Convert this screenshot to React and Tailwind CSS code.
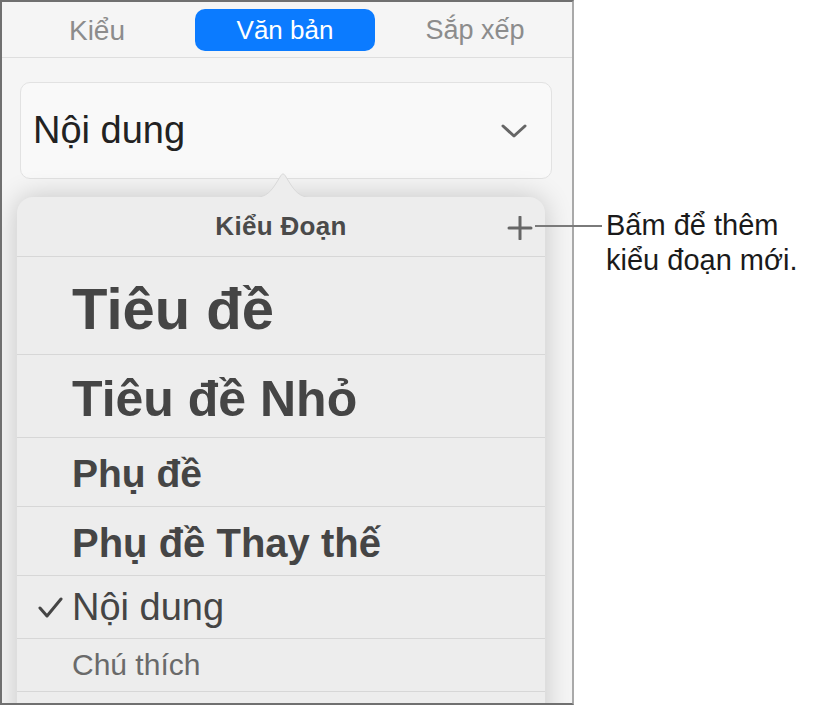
import React from 'react';

const rows = [
  { label: 'Tiêu đề', h: 'h-[98px]', text: 'text-[58px] font-bold text-[#454545] pt-[7px]' },
  { label: 'Tiêu đề Nhỏ', h: 'h-[83px]', text: 'text-[50px] font-bold text-[#454545] pt-[5px]' },
  { label: 'Phụ đề', h: 'h-[69px]', text: 'text-[39px] font-bold text-[#454545] pt-[3px]' },
  { label: 'Phụ đề Thay thế', h: 'h-[69px]', text: 'text-[40px] font-bold text-[#454545] pt-[3px]' },
  { label: 'Nội dung', h: 'h-[63px]', text: 'text-[38px] text-[#454545]', checked: true },
  { label: 'Chú thích', h: 'h-[53px]', text: 'text-[30px] text-[#6a6a6a]' },
  { label: '', h: 'h-[40px]', text: '' },
];

const App = () => {
  return (
    <div className="relative w-[814px] h-[705px] bg-white font-['Liberation_Sans',Arial,sans-serif]">
      {/* PANEL */}
      <div className="w-[574px] h-[705px] border-t-2 border-l-2 border-b-2 border-r-2 border-t-[#707070] border-l-[#707070] border-b-[#707070] border-r-[#a9a9a9] bg-[#f5f5f5] overflow-hidden">
        {/* TABS */}
        <div className="h-[56px] flex items-center border-b border-[#dedede]">
          <div className="w-[190px] text-center text-[28px] text-[#8c8c8c] pt-[2px]">Kiểu</div>
          <div className="ml-[3px] w-[180px] h-[42px] rounded-[10px] bg-[#0b7bff] flex items-center justify-center text-[26px] text-white pt-[2px]">Văn bản</div>
          <div className="ml-[5px] w-[190px] text-center text-[27px] text-[#8c8c8c] pt-[2px]">Sắp xếp</div>
        </div>

        {/* DROPDOWN */}
        <div className="ml-[18px] mt-[24px] w-[532px] h-[97px] rounded-[10px] border border-[#e2e2e2] bg-[#f9f9f9] flex items-center justify-between pl-[12px] pr-[24px]">
          <span className="text-[38px] text-[#222]">Nội dung</span>
          <svg width="26" height="14" viewBox="0 0 26 14">
            <polyline points="2,2 13,12 24,2" fill="none" stroke="#666" strokeWidth="3" strokeLinecap="round" strokeLinejoin="round" />
          </svg>
        </div>

        {/* POPOVER */}
        <div className="relative ml-[15px] mt-[18px] w-[528px] rounded-t-[16px] bg-[#ededed] shadow-[0_0_28px_rgba(0,0,0,0.2)]">
          <svg className="absolute left-[233px] top-[-26px]" width="66" height="27" viewBox="0 0 66 27">
            <path d="M0 27 C14 27 19 23 25 14 L30 6 C32 2 34 2 36 6 L41 14 C47 23 52 27 66 27 Z" fill="#ededed" stroke="#d9d9d9" strokeWidth="1" />
            <rect x="0" y="26" width="66" height="2" fill="#ededed" />
          </svg>
          <div className="relative h-[60px] flex items-center justify-center border-b border-[#d7d7d7]">
            <span className="text-[26px] font-bold text-[#4a4a4a] tracking-[0.3px]">Kiểu Đoạn</span>
            <svg className="absolute right-[12px] top-[19px]" width="26" height="24" viewBox="0 0 26 24">
              <path d="M13 1 V23 M2 12 H24" stroke="#666" strokeWidth="3" strokeLinecap="round" />
            </svg>
          </div>
          {rows.map((r, i) => (
            <div key={i} className={`relative ${r.h} flex items-center pl-[55px] border-b border-[#d7d7d7]`}>
              {r.checked && (
                <svg className="absolute left-[21px] top-[21px]" width="25" height="22" viewBox="0 0 25 22">
                  <polyline points="2,11 9,19 23,2" fill="none" stroke="#454545" strokeWidth="3" strokeLinecap="round" strokeLinejoin="round" />
                </svg>
              )}
              <span className={`${r.text} leading-none`}>{r.label}</span>
            </div>
          ))}
        </div>
      </div>

      {/* CALLOUT */}
      <div className="absolute left-[535px] top-[225px] w-[67px] h-[2px] bg-[#7a7a7a]" />
      <div className="absolute left-[606px] top-[208px] text-[29px] leading-[35px] text-[#1a1a1a]">
        <p>Bấm để thêm</p>
        <p>kiểu đoạn mới.</p>
      </div>
    </div>
  );
};

export default App;
